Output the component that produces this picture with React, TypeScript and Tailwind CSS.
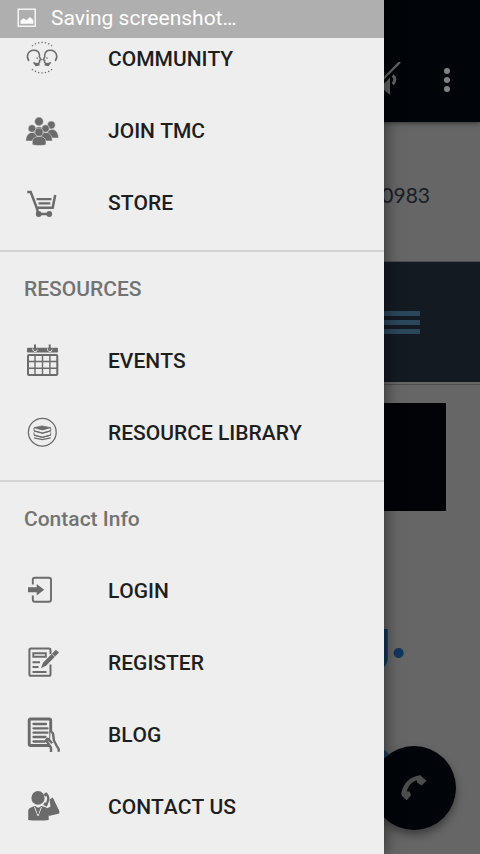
import type { ReactNode } from "react";

type MenuItem = {
  label: string;
  icon: ReactNode;
};

function Icon({ children }: { children: ReactNode }) {
  return (
    <svg
      viewBox="0 0 36 36"
      className="h-9 w-9 shrink-0 overflow-visible text-[#6b6b6b]"
      fill="none"
      stroke="currentColor"
      strokeWidth="2"
    >
      {children}
    </svg>
  );
}

function CommunityIcon() {
  const face = "M5 20C1.6 15.5 4 9.4 9.5 9.2c3.2-.1 5.600 1.800 6 4.600l-.1 2 1.600 2.900-1.500.6.1 2-1.200 1.500-3.400-.3M9.600 21.200l2.400 3.200 3.600-.7M13.200 16.600v1.200";
  return (
    <Icon>
      <path d="M8 5C13.5.3 22.5.3 28 5M8 28.200C13.5 33 22.5 33 28 28.200" strokeWidth="1.3" strokeDasharray="1.300 2.100" />
      <path d={face} strokeWidth="1.500" />
      <path d={face} strokeWidth="1.500" transform="translate(36.200 0) scale(-1 1)" />
    </Icon>
  );
}

function PeopleIcon() {
  return (
    <Icon>
      <g fill="currentColor" stroke="#eee" strokeWidth="0.5">
        <circle cx="15" cy="8.5" r="4.4" />
        <path d="M9 20c0-8.500 12-8.500 12 0z" />
        <circle cx="27.300" cy="12" r="4" />
        <path d="M22 25c0-12 12.500-11 12.500 0z" />
        <circle cx="8" cy="15.500" r="3.800" />
        <path d="M1.800 28c0-11.500 12.500-11.500 12.500 0z" />
        <circle cx="21.500" cy="15.500" r="3.800" />
        <path d="M15.500 28c0-11.500 12.800-11.500 12.800 0z" />
        <circle cx="15" cy="19.200" r="4.100" />
        <path d="M8.300 31.800v-3.300c0-6.800 13.700-6.800 13.700 0v3.300c-3 1-10.700 1-13.700 0z" />
      </g>
    </Icon>
  );
}

function CartIcon() {
  return (
    <Icon>
      <path d="M3.200 7h3.500l6 15.700h16L31.200 9.900M12.800 22.900l1.400 6h11" strokeWidth="2.500" />
      <path d="M12.500 14.100h15M14.500 18.300h11.800" strokeWidth="2.300" />
      <circle cx="14.700" cy="29" r="2.900" fill="currentColor" stroke="none" />
      <circle cx="25.300" cy="29" r="2.900" fill="currentColor" stroke="none" />
    </Icon>
  );
}

function CalendarIcon() {
  return (
    <Icon>
      <rect x="3" y="4.800" width="31" height="4.700" rx="0.800" fill="currentColor" stroke="none" />
      <path d="M8.700 5.500c0 4 4.600 4 4.600 1M23.400 5.500c0 4 4.600 4 4.600 1" stroke="#eee" strokeWidth="1" />
      <path d="M11 1.500v6M25.700 1.500v6" strokeWidth="2" />
      <rect x="4" y="12" width="29.300" height="20" rx="1" />
      <path d="M11 12v20M18.500 12v20M25.900 12v20M4 18.500h29M4 25.300h29" strokeWidth="1.400" />
    </Icon>
  );
}

function LibraryIcon() {
  return (
    <Icon>
      <circle cx="18.300" cy="17.200" r="13.900" strokeWidth="1.300" />
      <g transform="translate(0 .4)">
        <path d="M10 12.300l8-1.800 8.700 1.800-8.200 2.200z" fill="currentColor" strokeWidth="0.800" />
        <path d="M10 12.500v3l8.400 2.200 8.300-2.200v-3M10 17v2.700l8.400 2.200 8.300-2.200V17" strokeWidth="0.900" />
        <path d="M10 15.500l8.400 2.200 8.300-2.200M10 19.700l8.400 2.200 8.300-2.200M10 22.500l8.400 1.700 8.300-1.700" strokeWidth="1.300" />
      </g>
    </Icon>
  );
}

function LoginIcon() {
  return (
    <Icon>
      <path d="M8.800 11.500V6.800c0-1.300.7-2 2-2h14c1.400 0 2.200.8 2.200 2v20c0 1.300-.8 2-2.200 2h-14c-1.300 0-2-.7-2-2v-4.300" strokeWidth="1.900" />
      <path d="M4 14.300h8.700v-3.200l7.500 5.700-7.500 5.700v-3.200H4z" fill="currentColor" stroke="none" />
    </Icon>
  );
}

function RegisterIcon() {
  return (
    <Icon>
      <path d="M26.500 9V5.200c0-1-.5-1.600-1.600-1.600H7c-1 0-1.600.600-1.600 1.600v24c0 1 .600 1.600 1.600 1.600h17.900c1 0 1.600-.600 1.600-1.600V19.500" />
      <path d="M9.300 8.200h12.500v3.500H9.300zM8.500 17.200H16M8.500 22h6M8.500 27h14" strokeWidth="1.900" />
      <path d="M31.800 4.800l3.200 2.700L22.300 20.500l-5.300 2.800 2-5.600z" fill="currentColor" stroke="none" />
      <path d="M27.800 8.700l3.200 3" stroke="#eee" strokeWidth="0.700" />
    </Icon>
  );
}

function BlogIcon() {
  return (
    <Icon>
      <rect x="5.200" y="2" width="21.500" height="26.500" rx="1.500" strokeWidth="2.900" />
      <path d="M9.500 7H22M9.500 11.300h14M9.500 15.700h14M9.500 20h12M9.500 24.500H21" strokeWidth="2.300" strokeLinecap="round" />
      <path d="M26 34.500v-5l-4.500-7c-.5-2 1.300-2.600 2.500-1l2 2.500.5-8.500 3 .5 1 8 5 6.500v4.200z" fill="#eee" stroke="none" />
      <path d="M27 35v-4.500l-4.500-6.600c-.8-1.900 1-2.800 2.200-1.300l3.500 3.700M27.200 15.500c1.500-.2 2 1 2 2.500l.7 5.500 2.600 5 2.200 3.700v2.500" strokeWidth="2.400" />
    </Icon>
  );
}

function ContactIcon() {
  return (
    <Icon>
      <g fill="currentColor" stroke="none">
        <ellipse cx="14" cy="8.900" rx="6.600" ry="6.900" />
        <path d="M4.200 30.900v-9c0-3.200 4-4 7-5l3 2 3-2c3.200 1 7.500 1.500 7.500 5v9c-5 .8-15.500.8-20.500 0z" />
        <path d="M22 20l4.500-2.500-1-7 3.300-2L35.300 22v2.500l-10.500 2.500z" />
      </g>
      <path d="M21.700 4c3.500 3 3.500 8.500-.3 12" strokeWidth="2.300" />
      <path d="M20.500 4.700l2.300 2M20 14.500l3.300 2" strokeWidth="3" />
      <path d="M10.500 18l3.500 9 3.500-9" stroke="#eee" strokeWidth="0.900" />
      <path d="M14 18.800v6" strokeWidth="1.500" />
    </Icon>
  );
}

const mainItems: MenuItem[] = [
  { label: "COMMUNITY", icon: <CommunityIcon /> },
  { label: "JOIN TMC", icon: <PeopleIcon /> },
  { label: "STORE", icon: <CartIcon /> },
];

const resourceItems: MenuItem[] = [
  { label: "EVENTS", icon: <CalendarIcon /> },
  { label: "RESOURCE LIBRARY", icon: <LibraryIcon /> },
];

const contactItems: MenuItem[] = [
  { label: "LOGIN", icon: <LoginIcon /> },
  { label: "REGISTER", icon: <RegisterIcon /> },
  { label: "BLOG", icon: <BlogIcon /> },
  { label: "CONTACT US", icon: <ContactIcon /> },
];

function MenuSection({ title, items }: { title?: string; items: MenuItem[] }) {
  return (
    <section className={title ? "mt-[11px] border-t-2 border-[#d3d3d3]" : ""}>
      {title ? (
        <h2 className="flex h-[73px] items-center pt-0.5 pl-6 text-[21px] font-medium text-[#737373]">{title}</h2>
      ) : null}
      <ul>
        {items.map((item) => (
          <li key={item.label} className="flex h-[72px] items-center gap-12 pl-6 text-[21px] font-medium text-[#1e1e1e]">
            {item.icon}
            <span className="pt-0.5 whitespace-nowrap [font-kerning:none]">{item.label}</span>
          </li>
        ))}
      </ul>
    </section>
  );
}

function Drawer() {
  return (
    <aside className="absolute inset-y-0 left-0 flex w-96 flex-col overflow-hidden bg-[#eeeeee] shadow-[0_0_16px_rgba(0,0,0,0.6)]">
      <div className="z-10 flex h-[38px] shrink-0 items-center bg-[#afafaf] pl-[17px] text-[21px] text-white">
        <svg viewBox="0 0 20 20" className="mb-0.5 h-5 w-5" fill="none" stroke="white" strokeWidth="1.300">
          <rect x="1.200" y="1.200" width="17" height="17" />
          <path d="M3.500 15.800v-3.300l3-2.300 3 2 3.500-3.200 3.300 3.200v3.600z" fill="white" stroke="none" />
        </svg>
        <span className="ml-3.5">Saving screenshot…</span>
      </div>
      <nav className="-mt-[15px]">
        <MenuSection items={mainItems} />
        <MenuSection title="RESOURCES" items={resourceItems} />
        <MenuSection title="Contact Info" items={contactItems} />
      </nav>
    </aside>
  );
}

function PageBehind() {
  return (
    <main className="flex h-full flex-col bg-[#666666]">
      <header className="z-10 flex h-[122px] shrink-0 items-end justify-end bg-[#010408] pr-[30px] pb-6 shadow-[0_1px_5px_rgba(0,0,0,0.5)]">
        <svg viewBox="0 0 32 36" className="mr-[43px] h-9 w-8" fill="none" stroke="#646464">
          <path d="M7 19h6l8-8v22l-8-7H7z" fill="#646464" stroke="none" />
          <path d="M23.500 13.500c3 2 3 6 0 8.500" strokeWidth="3" />
          <path d="M9 23.500L32 .5" stroke="#010408" strokeWidth="6" />
          <path d="M9 22L31 0" strokeWidth="2.300" />
        </svg>
        <svg viewBox="0 0 6 24" className="mb-1.5 h-6 w-1.5" fill="#818181">
          <circle cx="3" cy="3" r="3" />
          <circle cx="3" cy="12" r="3" />
          <circle cx="3" cy="21" r="3" />
        </svg>
      </header>
      <div className="flex h-[139px] shrink-0 items-center justify-end pt-[7px] pr-[50px] font-['Lato'] text-[21px] text-[#1b1e24]">
        0983
      </div>
      <div className="flex h-[121px] shrink-0 items-center justify-end border-t border-[#4a4d51] bg-[#141a22] pr-[60px]">
        <div className="flex w-[46px] flex-col gap-[4px]">
          <span className="h-[5px] bg-[#2b475b]" />
          <span className="h-[5px] bg-[#2b475b]" />
          <span className="h-[5px] bg-[#2b475b]" />
        </div>
      </div>
      <div className="h-[3px] shrink-0 border-b border-[#4d4d4d]" />
      <div className="mt-[18px] mr-[34px] ml-[34px] h-[108px] shrink-0 bg-[#010307]" />
      <div className="mt-[90px] flex shrink-0 items-baseline justify-end pr-[74px] text-[54px] leading-[66px] font-bold text-[#12375b]">
        <span className="font-['Inter']">g</span>
        <span className="font-['Lato'] text-[62px] leading-[66px] font-black">.</span>
      </div>
      <div className="absolute top-[749px] left-[370px] h-5 w-5 rounded-full bg-[#174260]" />
      <button
        type="button"
        aria-label="Call"
        className="absolute top-[746px] left-[372px] flex h-[84px] w-[84px] items-center justify-center rounded-full bg-[#010408] shadow-[0_5px_9px_rgba(0,0,0,0.4)]"
      >
        <svg viewBox="0 0 26 26" className="h-[26px] w-[26px]" fill="#4c4c4c">
          <path d="M.2 18.500C2 9 8 2 18.500.3c1-.1 1.800.3 2.200 1.200l4.800 4.300-4.800 4.800-4.600-2.800-.3-2.500C10.500 7 7.200 10.700 6 16.400l2.700.2 1.300 3.700-4.200 5-4.700-4.200z" />
        </svg>
      </button>
    </main>
  );
}

export default function App() {
  return (
    <div className="relative h-[854px] w-[480px] overflow-hidden font-['Roboto',sans-serif]">
      <PageBehind />
      <div className="absolute inset-0 z-20">
        <Drawer />
      </div>
    </div>
  );
}
